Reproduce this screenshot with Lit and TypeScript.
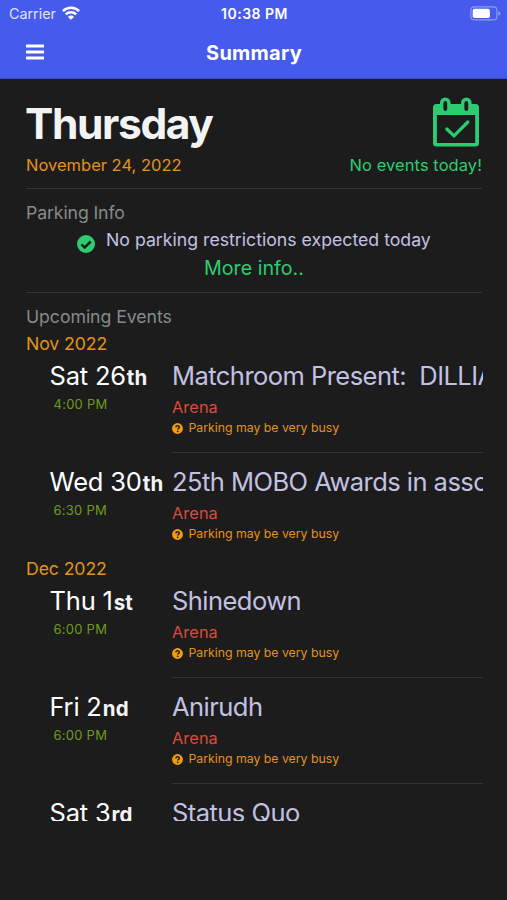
import { LitElement, html, css, svg } from "lit";
import { customElement, property } from "lit/decorators.js";

interface EventItem {
  day: string;
  suffix: string;
  time: string;
  title: string;
  venue: string;
  note: string;
}

interface Month {
  label: string;
  events: EventItem[];
}

const item = (day: string, suffix: string, time: string, title: string): EventItem => ({
  day,
  suffix,
  time,
  title,
  venue: "Arena",
  note: "Parking may be very busy",
});

const MONTHS: Month[] = [
  {
    label: "Nov 2022",
    events: [
      item("Sat 26", "th", "4:00 PM", "Matchroom Present:  DILLIAN"),
      item("Wed 30", "th", "6:30 PM", "25th MOBO Awards in association"),
    ],
  },
  {
    label: "Dec 2022",
    events: [
      item("Thu 1", "st", "6:00 PM", "Shinedown"),
      item("Fri 2", "nd", "6:00 PM", "Anirudh"),
      item("Sat 3", "rd", "6:00 PM", "Status Quo"),
    ],
  },
];

const wifi = svg`<svg class="wifi" width="18" height="14" viewBox="0 0 18 14" fill="none" stroke="#fff" stroke-width="2.5">
  <path d="M0.9 5.1a11.6 11.6 0 0 1 16.2 0" />
  <path d="M3.8 8.4a7.5 7.5 0 0 1 10.4 0" />
  <path d="M9 13.8 5.9 10.9a4.4 4.4 0 0 1 6.2 0z" fill="#fff" stroke="none" />
</svg>`;

const battery = svg`<svg width="31" height="15" viewBox="0 0 31 15">
  <rect x="0.9" y="0.9" width="26" height="13" rx="3.4" fill="none" stroke="#fff" stroke-opacity="0.4" stroke-width="1.1" />
  <rect x="2.7" y="2.7" width="17.2" height="9.4" rx="1.8" fill="#fff" />
  <path d="M28.4 5.2c1.2.4 1.9 1.2 1.9 2.2s-.7 1.8-1.9 2.2z" fill="#fff" fill-opacity="0.45" />
</svg>`;

const menu = svg`<svg width="19" height="17" viewBox="0 0 19 17" fill="#fff">
  <rect x="0" y="0.6" width="18" height="3" rx="0.5" />
  <rect x="0" y="6.6" width="18" height="3" rx="0.5" />
  <rect x="0" y="12.6" width="18" height="3" rx="0.5" />
</svg>`;

const calendar = svg`<svg width="48" height="51" viewBox="0 0 48 51">
  <path fill="#2ecc71" fill-rule="evenodd" d="M4.5 7H8V5.800a5.300 5.300 0 0 1 10.600 0V7H29V5.800a5.300 5.300 0 0 1 10.600 0V7H43.500a3.500 3.500 0 0 1 3.500 3.500V46a3.500 3.500 0 0 1-3.500 3.500H4.500A3.500 3.500 0 0 1 1 46V10.500A3.500 3.500 0 0 1 4.500 7zM4.900 18V45.900H43.200V18zM13.300 4a1.900 1.900 0 0 0-1.900 1.900v6.100a1.900 1.900 0 0 0 3.800 0V5.900a1.900 1.900 0 0 0-1.900-1.900zM34.300 4a1.900 1.900 0 0 0-1.900 1.900v6.100a1.900 1.900 0 0 0 3.800 0V5.900a1.900 1.900 0 0 0-1.900-1.900z" />
  <path d="M14.800 32 22 38.800 35.800 25" fill="none" stroke="#2ecc71" stroke-width="3.200" stroke-linecap="round" />
</svg>`;

const check = svg`<svg class="check" width="18" height="18" viewBox="0 0 18 18">
  <circle cx="9" cy="9" r="9" fill="#2ecc71" />
  <path d="M4.400 9.300 7.700 12.500 13.700 6.500" fill="none" stroke="#1c1c1c" stroke-width="2.500" />
</svg>`;

const question = svg`<svg class="question" width="11" height="11" viewBox="0 0 11 11">
  <circle cx="5.500" cy="5.500" r="5.400" fill="#f39c12" />
  <path d="M3.700 4.300c.2-1.100.9-1.600 1.800-1.600 1.100 0 1.900.6 1.900 1.500 0 1.100-1.600 1.100-1.600 2.200" fill="none" stroke="#1c1c1c" stroke-width="1.400" />
  <circle cx="5.700" cy="8.300" r="0.900" fill="#1c1c1c" />
</svg>`;

@customElement("event-row")
export class EventRow extends LitElement {
  @property({ attribute: false }) event!: EventItem;

  static styles = css`
    :host {
      display: grid;
      grid-template-columns: 122px minmax(0, 1fr);
      height: 106px;
      padding-left: 24px;
      box-sizing: border-box;
    }
    .date {
      margin-left: -0.5px;
      font-size: 25.5px;
      line-height: 30px;
      height: 30px;
      letter-spacing: -0.2px;
      color: #fff;
      white-space: nowrap;
    }
    .suffix {
      margin-left: 1px;
      font-size: 20.5px;
      font-weight: 700;
      letter-spacing: 0.2px;
      color: #f4f4f4;
    }
    .time {
      margin-left: 3.5px;
      font-size: 13px;
      line-height: 27px;
      letter-spacing: 0.25px;
      color: #6f9a1e;
    }
    .info {
      display: flex;
      flex-direction: column;
      height: 92px;
      box-sizing: border-box;
      border-bottom: 1px solid #333;
      overflow: hidden;
    }
    :host([last]) .info {
      border-bottom-color: transparent;
    }
    .title {
      font-size: 25.5px;
      line-height: 30px;
      color: #c2c1e2;
      letter-spacing: -0.54px;
      white-space: pre;
    }
    .venue {
      margin-top: 5px;
      font-size: 16.3px;
      line-height: 22px;
      letter-spacing: 0.1px;
      color: #de4a3b;
    }
    .note {
      display: flex;
      align-items: center;
      gap: 5.5px;
      margin-top: 1px;
      font-size: 12.3px;
      line-height: 18px;
      letter-spacing: -0.01px;
      color: #e3931a;
    }
    .question {
      display: block;
      margin-top: 1px;
    }
  `;

  render() {
    const e = this.event;
    return html`
      <div>
        <div class="date">${e.day}<span class="suffix">${e.suffix}</span></div>
        <div class="time">${e.time}</div>
      </div>
      <div class="info">
        <div class="title">${e.title}</div>
        <div class="venue">${e.venue}</div>
        <div class="note">${question}<span>${e.note}</span></div>
      </div>
    `;
  }
}

@customElement("app-root")
export class AppRoot extends LitElement {
  static styles = css`
    :host {
      display: flex;
      flex-direction: column;
      height: 900px;
      overflow: hidden;
      background: #1c1c1c;
      font-family: Inter, "Liberation Sans", sans-serif;
      color: #fff;
    }
    .top {
      flex: none;
      height: 79px;
      box-sizing: border-box;
      background: #465bec;
      border-bottom: 1px solid #3a4cc4;
    }
    .bar {
      display: grid;
      grid-template-columns: 1fr auto 1fr;
      align-items: center;
      padding: 0 6px 0 9px;
      height: 27px;
      font-size: 14.3px;
    }
    .left {
      display: flex;
      align-items: center;
      gap: 6px;
      color: #dfe3ff;
    }
    .wifi {
      margin-top: -2px;
    }
    .clock {
      margin-left: -1px;
      font-size: 14px;
      font-weight: 600;
      letter-spacing: 0.5px;
    }
    .right {
      display: flex;
      justify-content: flex-end;
    }
    .nav {
      display: grid;
      grid-template-columns: 1fr auto 1fr;
      align-items: center;
      height: 51px;
      padding: 0 25px 0 26px;
    }
    .nav svg {
      display: block;
    }
    .screen {
      font-size: 20px;
      font-weight: 700;
      letter-spacing: 0.25px;
    }
    .content {
      display: flex;
      flex-direction: column;
      flex: none;
      height: 742px;
      padding: 18px 24px 0 26px;
      box-sizing: border-box;
      overflow: hidden;
    }
    .today {
      display: flex;
      flex: none;
      justify-content: space-between;
      height: 91px;
      margin-right: 1px;
      border-bottom: 1px solid #353535;
    }
    .weekday {
      margin-left: -1px;
      font-size: 42.5px;
      font-weight: 700;
      line-height: 54px;
      letter-spacing: -1.4px;
      color: #f2f4f4;
    }
    .caption {
      font-size: 16.5px;
      line-height: 20px;
      margin-top: 4px;
      color: #e3931a;
    }
    .status {
      display: flex;
      flex-direction: column;
      align-items: flex-end;
    }
    .status svg {
      display: block;
      margin: 0 2px 3px 0;
    }
    .status .caption {
      color: #2ecc71;
      letter-spacing: 0.06px;
    }
    .parking {
      flex: none;
      height: 103px;
      margin-right: 1px;
      border-bottom: 1px solid #353535;
    }
    .label {
      flex: none;
      font-size: 17.7px;
      line-height: 26px;
      letter-spacing: -0.06px;
      color: #868b8c;
    }
    .parking .label {
      margin-top: 11px;
      letter-spacing: -0.12px;
    }
    .notice {
      display: flex;
      gap: 11px;
      margin: 1px 0 0 51px;
      font-size: 17.7px;
      line-height: 26px;
      color: #c2c1e2;
    }
    .check {
      margin-top: 8px;
    }
    .more {
      text-align: center;
      font-size: 19.7px;
      line-height: 30px;
      color: #2ecc71;
    }
    .upcoming {
      margin-top: 11px;
    }
    .month {
      flex: none;
      font-size: 17.7px;
      line-height: 26px;
      margin: 1px 0 4px;
      letter-spacing: -0.12px;
      color: #e3931a;
    }
    event-row {
      flex: none;
    }
    event-row + .month {
      margin-top: -17px;
    }
  `;

  render() {
    return html`
      <header class="top">
        <div class="bar">
          <div class="left"><span class="carrier">Carrier</span>${wifi}</div>
          <div class="clock">10:38 PM</div>
          <div class="right">${battery}</div>
        </div>
        <div class="nav">
          ${menu}
          <div class="screen">Summary</div>
        </div>
      </header>
      <main class="content">
        <section class="today">
          <div>
            <div class="weekday">Thursday</div>
            <div class="caption">November 24, 2022</div>
          </div>
          <div class="status">
            ${calendar}
            <div class="caption">No events today!</div>
          </div>
        </section>
        <section class="parking">
          <div class="label">Parking Info</div>
          <div class="notice">${check}<span>No parking restrictions expected today</span></div>
          <div class="more">More info..</div>
        </section>
        <div class="label upcoming">Upcoming Events</div>
        ${MONTHS.map(
          (m, i) => html`
            <div class="month">${m.label}</div>
            ${m.events.map(
              (e, j) => html`<event-row
                .event=${e}
                ?last=${i < MONTHS.length - 1 && j === m.events.length - 1}
              ></event-row>`
            )}
          `
        )}
      </main>
    `;
  }
}
